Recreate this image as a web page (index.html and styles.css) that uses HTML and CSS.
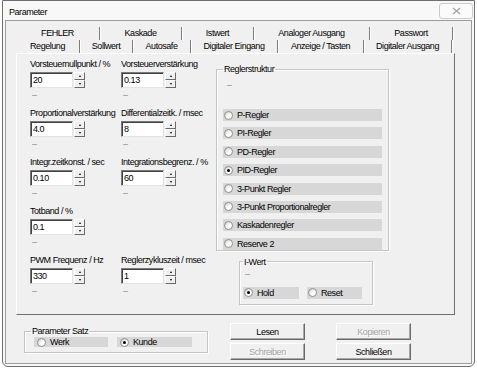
FILE: index.html
```html
<!DOCTYPE html>
<html lang="de">
<head>
    <meta charset="UTF-8">
    <meta name="viewport" content="width=device-width, initial-scale=1.0">
    <title>Parameter</title>
    <link rel="stylesheet" href="styles.css">
</head>
<body>
<div class="window">
    <div class="titlebar">
        <span class="title">Parameter</span>
        <span class="close-btn">
            <svg width="9" height="8" viewBox="0 0 9 8"><path d="M1 1 L8 7 M8 1 L1 7" stroke="#a3a3a3" stroke-width="1.3"/></svg>
        </span>
    </div>

    <div class="client">
        <!-- Registerkarten -->
        <div class="tabs">
            <div class="tab-row row-back">
                <span class="tab">FEHLER</span>
                <span class="tab">Kaskade</span>
                <span class="tab">Istwert</span>
                <span class="tab">Analoger Ausgang</span>
                <span class="tab">Passwort</span>
            </div>
            <div class="tab-row row-front">
                <span class="tab active">Regelung</span>
                <span class="tab">Sollwert</span>
                <span class="tab">Autosafe</span>
                <span class="tab">Digitaler Eingang</span>
                <span class="tab">Anzeige / Tasten</span>
                <span class="tab">Digitaler Ausgang</span>
            </div>
        </div>

        <div class="tab-page">
            <!-- Eingabefelder -->
            <div class="fields">
                <div class="field">
                    <label>Vorsteuernullpunkt / %</label>
                    <div class="spin-box"><input type="text" value="20"><span class="spin"><i class="up"></i><i class="down"></i></span></div>
                    <span class="dash">–</span>
                </div>
                <div class="field">
                    <label>Vorsteuerverstärkung</label>
                    <div class="spin-box"><input type="text" value="0.13"><span class="spin"><i class="up"></i><i class="down"></i></span></div>
                    <span class="dash">–</span>
                </div>
                <div class="field">
                    <label>Proportionalverstärkung</label>
                    <div class="spin-box"><input type="text" value="4.0"><span class="spin"><i class="up"></i><i class="down"></i></span></div>
                    <span class="dash">–</span>
                </div>
                <div class="field">
                    <label>Differentialzeitk. / msec</label>
                    <div class="spin-box"><input type="text" value="8"><span class="spin"><i class="up"></i><i class="down"></i></span></div>
                    <span class="dash">–</span>
                </div>
                <div class="field">
                    <label>Integr.zeitkonst. / sec</label>
                    <div class="spin-box"><input type="text" value="0.10"><span class="spin"><i class="up"></i><i class="down"></i></span></div>
                    <span class="dash">–</span>
                </div>
                <div class="field">
                    <label>Integrationsbegrenz. / %</label>
                    <div class="spin-box"><input type="text" value="60"><span class="spin"><i class="up"></i><i class="down"></i></span></div>
                    <span class="dash">–</span>
                </div>
                <div class="field">
                    <label>Totband / %</label>
                    <div class="spin-box"><input type="text" value="0.1"><span class="spin"><i class="up"></i><i class="down"></i></span></div>
                    <span class="dash">–</span>
                </div>
                <div class="field"></div>
                <div class="field">
                    <label>PWM Frequenz / Hz</label>
                    <div class="spin-box"><input type="text" value="330"><span class="spin"><i class="up"></i><i class="down"></i></span></div>
                    <span class="dash">–</span>
                </div>
                <div class="field">
                    <label>Reglerzykluszeit / msec</label>
                    <div class="spin-box"><input type="text" value="1"><span class="spin"><i class="up"></i><i class="down"></i></span></div>
                    <span class="dash">–</span>
                </div>
            </div>

            <div class="right-col">
                <fieldset class="group struktur">
                    <legend>Reglerstruktur</legend>
                    <div class="group-dash">–</div>
                    <div class="opt"><span class="radio"></span>P-Regler</div>
                    <div class="opt"><span class="radio"></span>PI-Regler</div>
                    <div class="opt"><span class="radio"></span>PD-Regler</div>
                    <div class="opt"><span class="radio on"></span>PID-Regler</div>
                    <div class="opt"><span class="radio"></span>3-Punkt Regler</div>
                    <div class="opt"><span class="radio"></span>3-Punkt Proportionalregler</div>
                    <div class="opt"><span class="radio"></span>Kaskadenregler</div>
                    <div class="opt"><span class="radio"></span>Reserve 2</div>
                </fieldset>

                <fieldset class="group iwert">
                    <legend>I-Wert</legend>
                    <div class="group-dash">–</div>
                    <div class="opt-row">
                        <div class="opt hold"><span class="radio on"></span>Hold</div>
                        <div class="opt reset"><span class="radio"></span>Reset</div>
                    </div>
                </fieldset>
            </div>
        </div>

        <!-- Parametersatz und Knöpfe -->
        <div class="bottom">
            <fieldset class="group satz">
                <legend>Parameter Satz</legend>
                <div class="opt-row">
                    <div class="opt werk"><span class="radio"></span>Werk</div>
                    <div class="opt kunde"><span class="radio on"></span>Kunde</div>
                </div>
            </fieldset>
            <div class="buttons">
                <button>Lesen</button>
                <button disabled>Kopieren</button>
                <button disabled>Schreiben</button>
                <button>Schließen</button>
            </div>
        </div>
    </div>
</div>
</body>
</html>
```

FILE: styles.css
```css
/* Grundeinstellungen */
* {
    margin: 0;
    padding: 0;
    box-sizing: border-box;
}

body {
    font-family: "Liberation Sans", Arial, sans-serif;
    font-size: 9px;
    letter-spacing: -0.45px;
    color: #000;
    background-color: #fff;
}

/* Fensterrahmen */
.window {
    width: 473px;
    height: 367px;
    margin-left: 2px;
    border: 1px solid #6f6f6f;
    border-radius: 0 0 6px 6px;
    background-color: #f8f8f8;
    padding: 0 2px 2px 2px;
    display: flex;
    flex-direction: column;
}

.titlebar {
    height: 19px;
    display: flex;
    justify-content: space-between;
    align-items: flex-start;
}

.title {
    padding: 5px 0 0 4px;
    line-height: 12px;
}

.close-btn {
    width: 34px;
    height: 16px;
    margin-top: 2px;
    margin-right: -1px;
    border: 1px solid #cbcbcb;
    border-radius: 3px;
    background-color: #fbfbfb;
    display: flex;
    align-items: center;
    justify-content: center;
}

.client {
    flex: 1;
    border: 1px solid #9c9c9c;
    background-color: #f0f0f0;
    padding: 6px 0 0 10px;
}

/* Registerkarten */
.tab-row {
    display: grid;
    height: 13px;
}

.row-back {
    grid-template-columns: 84px 82px 72px 116px 83px;
}

.row-front {
    grid-template-columns: 64px 53px 58px 87px 86px 88px;
}

.tab {
    line-height: 13px;
    text-align: center;
    white-space: nowrap;
    border-right: 1px solid #7d7d7d;
    box-shadow: 1px 0 0 #fff;
}

.tab-page {
    width: 439px;
    height: 262px;
    border: 1px solid;
    border-color: #fff #707070 #707070 #fff;
    padding: 4px 0 0 13px;
    display: flex;
}

/* Eingabefelder */
.fields {
    width: 186px;
    display: grid;
    grid-template-columns: 91px 95px;
    grid-auto-rows: 49px;
    align-content: start;
}

.field label {
    display: block;
    line-height: 12px;
    white-space: nowrap;
}

.spin-box {
    display: flex;
    gap: 1px;
    height: 16px;
    margin-top: 2px;
}

.spin-box input {
    width: 43px;
    height: 16px;
    font: inherit;
    letter-spacing: inherit;
    color: #000;
    padding-left: 2px;
    background-color: #fff;
    border: 1px solid;
    border-color: #7a7a7a #e3e3e3 #e3e3e3 #7a7a7a;
    box-shadow: inset 1px 1px 0 #404040;
    outline: none;
}

.spin {
    width: 11px;
    display: flex;
    flex-direction: column;
}

.spin i {
    flex: 1;
    display: flex;
    align-items: center;
    justify-content: center;
    background-color: #f0f0f0;
    border: 1px solid;
    border-color: #fff #6a6a6a #6a6a6a #fff;
}

.spin i::after {
    content: "";
    width: 0;
    height: 0;
    border-left: 1.5px solid transparent;
    border-right: 1.5px solid transparent;
}

.spin .up::after {
    border-bottom: 2px solid #000;
}

.spin .down::after {
    border-top: 2px solid #000;
}

.dash {
    display: block;
    line-height: 10px;
    margin-top: 2px;
    padding-left: 2px;
    color: #8a8a8a;
}

/* Gruppenrahmen */
.right-col {
    display: flex;
    flex-direction: column;
    align-items: flex-start;
}

.group {
    border: 1px solid #c4c4c4;
    box-shadow: inset 1px 1px 0 #fff, 1px 1px 0 #fff;
}

.group legend {
    line-height: 12px;
    padding: 0 1px;
}

.group-dash {
    color: #8a8a8a;
    line-height: 10px;
}

.struktur {
    width: 173px;
    margin-top: 5px;
    padding: 0 6px;
}

.struktur .group-dash {
    height: 34px;
    padding: 5px 0 0 4px;
}

.iwert {
    width: 134px;
    margin: 5px 0 0 23px;
    padding: 0 3px 5px 3px;
}

.iwert .group-dash {
    height: 19px;
    padding: 1px 0 0 2px;
}

/* Optionsfelder */
.opt {
    height: 12px;
    display: flex;
    align-items: center;
    gap: 4px;
    padding-left: 1px;
    background-color: #d7d7d7;
    white-space: nowrap;
}

.struktur .opt {
    margin-bottom: 6.4px;
}

.struktur .opt:last-child {
    margin-bottom: 0;
}

.opt-row {
    display: flex;
    gap: 8px;
}

.radio {
    flex: none;
    width: 9px;
    height: 9px;
    border-radius: 50%;
    border: 1px solid #8e8e8e;
    background: linear-gradient(135deg, #d0d0d0, #fff 60%);
    display: flex;
    align-items: center;
    justify-content: center;
}

.radio.on::after {
    content: "";
    width: 3px;
    height: 3px;
    border-radius: 50%;
    background-color: #000;
}

.hold {
    width: 56px;
}

.reset {
    width: 55px;
}

/* unterer Bereich */
.bottom {
    display: flex;
    align-items: flex-start;
    margin-left: 8px;
}

.satz {
    width: 184px;
    margin-top: 10px;
    padding: 0 9px 5px 9px;
}

.satz legend {
    margin-left: -3px;
}

.satz .opt-row {
    gap: 9px;
}

.satz .opt {
    height: 10px;
    padding-left: 3px;
}

.werk {
    width: 74px;
}

.kunde {
    width: 75px;
}

.buttons {
    display: grid;
    grid-template-columns: 75px 75px;
    grid-auto-rows: 17px;
    column-gap: 31px;
    row-gap: 3px;
    margin: 8px 0 0 22px;
}

button {
    font: inherit;
    letter-spacing: inherit;
    color: #000;
    background-color: #f0f0f0;
    border: 1px solid;
    border-color: #fff #6a6a6a #6a6a6a #fff;
    box-shadow: inset -1px -1px 0 #a8a8a8;
}

button:disabled {
    color: #a3a3a3;
    text-shadow: 1px 1px 0 #fff;
}
```
